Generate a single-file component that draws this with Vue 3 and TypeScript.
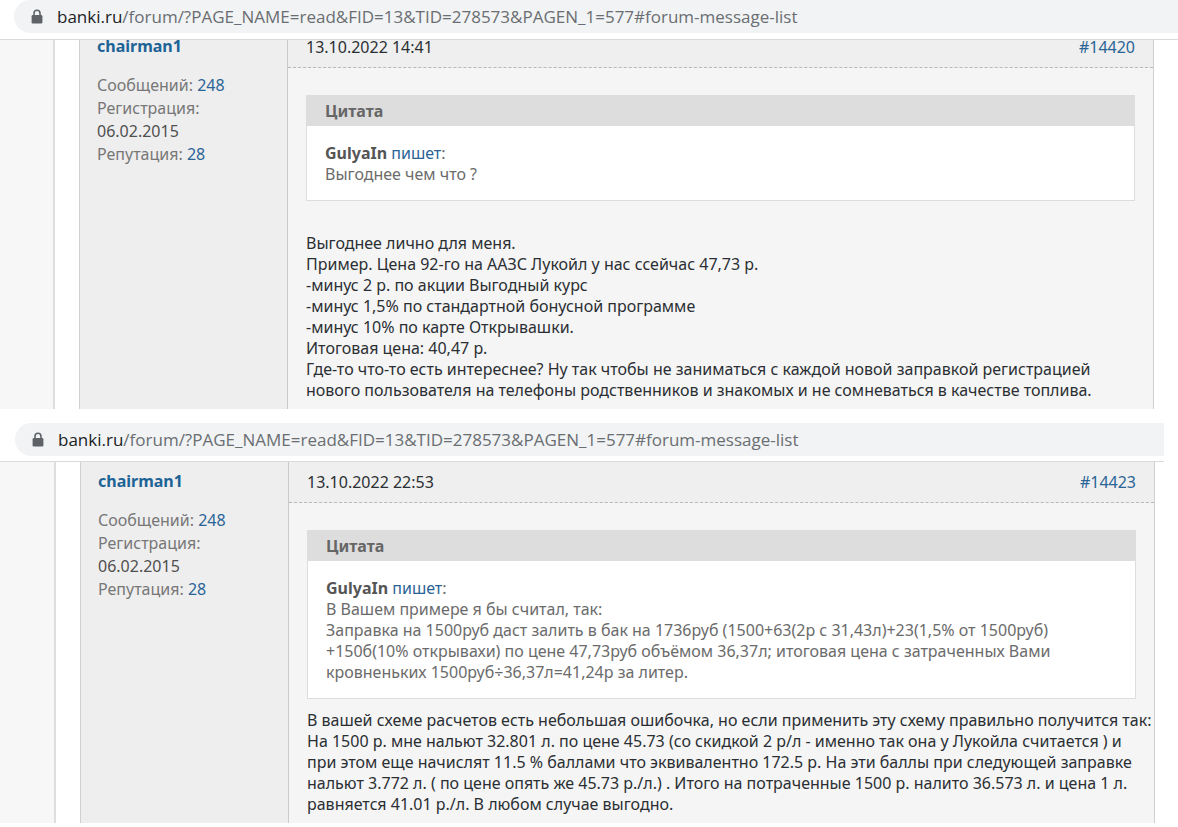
<script setup lang="ts">
interface Post {
  id: string
  date: string
  continued: boolean
  quote: string[]
  lines: string[]
}

const host = 'banki.ru'
const path = '/forum/?PAGE_NAME=read&FID=13&TID=278573&PAGEN_1=577#forum-message-list'

const posts: Post[] = [
  {
    id: '14420',
    date: '13.10.2022 14:41',
    continued: true,
    quote: ['Выгоднее чем что ?'],
    lines: [
      'Выгоднее лично для меня.',
      'Пример. Цена 92-го на ААЗС Лукойл у нас ссейчас 47,73 р.',
      '-минус 2 р. по акции Выгодный курс',
      '-минус 1,5% по стандартной бонусной программе',
      '-минус 10% по карте Открывашки.',
      'Итоговая цена: 40,47 р.',
      'Где-то что-то есть интереснее? Ну так чтобы не заниматься с каждой новой заправкой регистрацией',
      'нового пользователя на телефоны родственников и знакомых и не сомневаться в качестве топлива.',
    ],
  },
  {
    id: '14423',
    date: '13.10.2022 22:53',
    continued: false,
    quote: [
      'В Вашем примере я бы считал, так:',
      'Заправка на 1500руб даст залить в бак на 1736руб (1500+63(2р с 31,43л)+23(1,5% от 1500руб)',
      '+150б(10% открывахи) по цене 47,73руб объёмом 36,37л; итоговая цена с затраченных Вами',
      'кровненьких 1500руб÷36,37л=41,24р за литер.',
    ],
    lines: [
      'В вашей схеме расчетов есть небольшая ошибочка, но если применить эту схему правильно получится так:',
      'На 1500 р. мне нальют 32.801 л. по цене 45.73 (со скидкой 2 р/л - именно так она у Лукойла считается ) и',
      'при этом еще начислят 11.5 % баллами что эквивалентно 172.5 р. На эти баллы при следующей заправке',
      'нальют 3.772 л. ( по цене опять же 45.73 р./л.) . Итого на потраченные 1500 р. налито 36.573 л. и цена 1 л.',
      'равняется 41.01 р./л. В любом случае выгодно.',
    ],
  },
]
</script>

<template>
  <main class="shots">
    <section v-for="post in posts" :key="post.id" class="shot" :class="{ 'shot--continued': post.continued }">
      <header class="toolbar">
        <div class="omnibox">
          <svg class="lock" viewBox="0 0 12 16" aria-hidden="true">
            <path d="M3 6.5V4.2a3 3 0 0 1 6 0v2.3" fill="none" stroke="#5f6368" stroke-width="1.6" />
            <rect x="0.6" y="6" width="10.8" height="8.6" rx="1.3" fill="#5f6368" />
          </svg>
          <a class="url" href="#forum-message-list"><span class="host">{{ host }}</span>{{ path }}</a>
        </div>
      </header>
      <div class="viewport">
        <div class="page">
          <div class="gutter"></div>
          <article class="post">
            <aside class="user">
              <a class="name" href="#user">chairman1</a>
              <div class="stats">
                <div>Сообщений: <a href="#messages">248</a></div>
                <div>Регистрация:</div>
                <div class="since">06.02.2015</div>
                <div>Репутация: <a href="#reputation">28</a></div>
              </div>
            </aside>
            <div class="message">
              <div class="meta">
                <time>{{ post.date }}</time>
                <a :href="'#message' + post.id">#{{ post.id }}</a>
              </div>
              <div class="body">
                <blockquote class="quote">
                  <div class="quote-title">Цитата</div>
                  <div class="quote-body">
                    <div><b>GulyaIn</b> <a href="#quoted">пишет</a>:</div>
                    <div v-for="line in post.quote" :key="line">{{ line }}</div>
                  </div>
                </blockquote>
                <div class="text">
                  <div v-for="line in post.lines" :key="line">{{ line }}</div>
                </div>
              </div>
            </div>
          </article>
        </div>
      </div>
    </section>
  </main>
</template>

<style>
body {
  margin: 0;
  background: #fff;
}
</style>

<style scoped>
.shots {
  display: flex;
  flex-direction: column;
  gap: 14px;
  font-family: "Noto Sans", "Open Sans", sans-serif;
  font-size: 16px;
  line-height: 21px;
  color: #2b2f33;
  overflow: hidden;
}

a {
  color: #2a6496;
  text-decoration: none;
}

.shot {
  margin-right: 14px;
}

.shot--continued {
  margin-right: 0;
}

.toolbar {
  padding: 0 0 5px 15px;
  border-bottom: 1px solid #d9dadc;
}

.shot--continued .toolbar {
  padding: 0 0 6px 14px;
}

.omnibox {
  display: flex;
  align-items: center;
  gap: 14px;
  height: 33px;
  padding-left: 17px;
  background: #f1f3f4;
  border-radius: 17px 0 0 17px;
}

.lock {
  width: 12px;
  height: 16px;
  flex: none;
}

.url {
  font-family: "Open Sans", "Noto Sans", sans-serif;
  font-size: 17px;
  line-height: 24px;
  color: #6a6e72;
  white-space: nowrap;
}

.host {
  color: #202124;
}

.viewport {
  overflow: hidden;
}

.page {
  display: flex;
  padding-right: 9px;
}

/* The upper part of this page is scrolled under the toolbar */
.shot--continued .page {
  margin-top: -13px;
  padding-right: 24px;
}

.gutter {
  flex: none;
  box-sizing: border-box;
  width: 56px;
  margin-right: 24px;
  background: #f7f7f7;
  border-right: 2px solid #dedede;
}

.shot--continued .gutter {
  width: 55px;
}

.post {
  flex: 1;
  min-width: 0;
  display: flex;
  background: #f5f5f5;
  border: 0 solid #d0d0d0;
  border-width: 0 1px;
}

.user {
  flex: none;
  box-sizing: border-box;
  width: 208px;
  padding: 8px 0 0 17px;
  background: #eee;
  border-right: 1px solid #cacaca;
}

.name {
  display: block;
  font-weight: 700;
  line-height: 22px;
  color: #1d6396;
}

.stats {
  margin-top: 17px;
  line-height: 23px;
  color: #777;
}

.since {
  color: #505050;
}

.message {
  flex: 1;
  min-width: 0;
}

.meta {
  display: flex;
  justify-content: space-between;
  align-items: center;
  height: 40px;
  padding: 0 18px;
  background: #efefef;
  border-bottom: 1px dashed #b8b8b8;
}

.body {
  padding: 27px 18px 8px;
}

.quote {
  margin: 0;
  color: #6b6b6b;
}

.quote-title {
  padding: 6px 19px 4px;
  font-weight: 700;
  background: #ddd;
  color: #666;
}

.quote-body {
  padding: 17px 18px 15px;
  background: #fff;
  border: 1px solid #ddd;
  border-top: 0;
}

.quote b {
  color: #555;
}

.text {
  margin-top: 11px;
  white-space: nowrap;
}

.shot--continued .text {
  margin-top: 32px;
}
</style>
